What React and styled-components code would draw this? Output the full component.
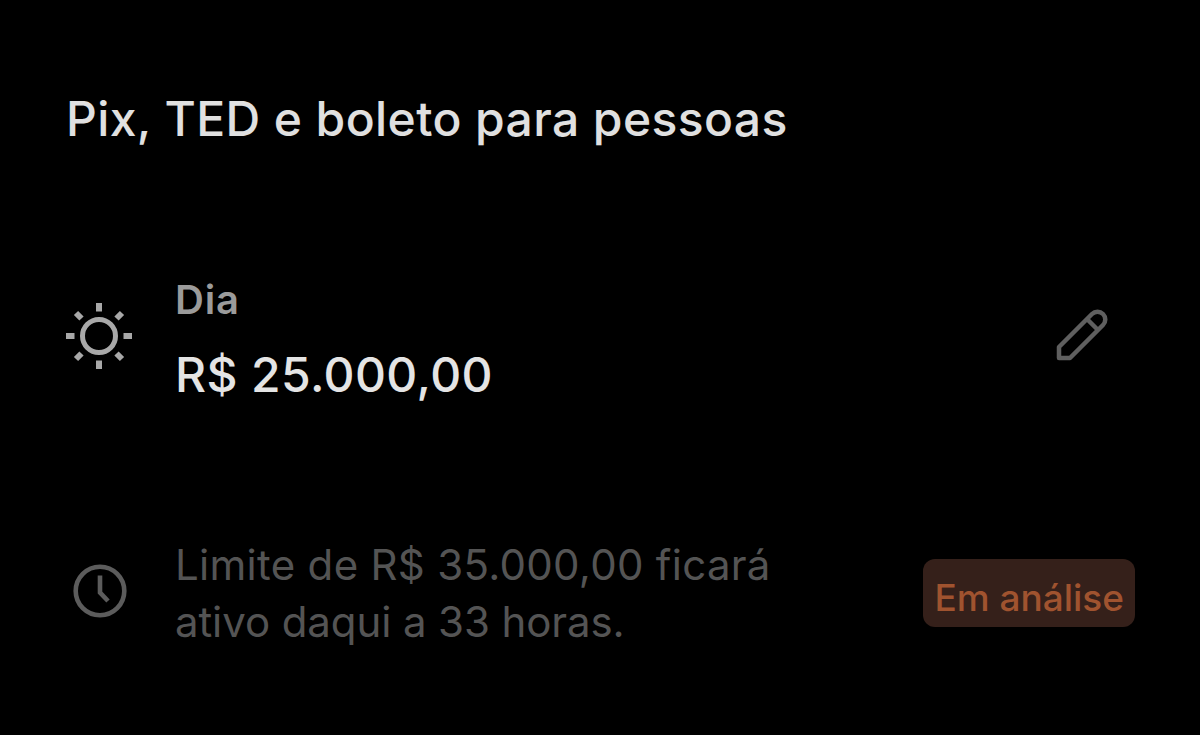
import React from "react";
import styled, { createGlobalStyle } from "styled-components";

const GlobalStyle = createGlobalStyle`
  html, body {
    margin: 0;
    background: #000;
  }
  body {
    font-family: Inter, "Liberation Sans", sans-serif;
  }
`;

const Page = styled.div`
  width: 1200px;
  height: 735px;
  box-sizing: border-box;
  padding: 92px 65px 0 65px;
  background: #000;
  overflow: hidden;
`;

const Title = styled.h1`
  margin: 0 0 0 1px;
  font-size: 48px;
  line-height: 54px;
  letter-spacing: 0.4px;
  font-weight: 500;
  color: #e0e0e0;
`;

const Row = styled.div`
  display: flex;
  align-items: center;
  margin-top: ${(p) => p.$top}px;
`;

const IconSlot = styled.div`
  width: 110px;
  flex: none;
  display: flex;
  box-sizing: border-box;
  padding-left: ${(p) => p.$indent || 0}px;
  margin-bottom: ${(p) => p.$lift || 0}px;
`;

const Body = styled.div`
  flex: 1;
  display: flex;
  flex-direction: column;
`;

const Label = styled.div`
  font-size: 40px;
  line-height: 44px;
  letter-spacing: 0.8px;
  font-weight: 600;
  color: #9b9b9b;
`;

const Amount = styled.div`
  margin-top: 26px;
  font-size: 48px;
  line-height: 54px;
  letter-spacing: 0.4px;
  font-weight: 500;
  color: #e4e4e4;
`;

const NoteLine = styled.div`
  font-size: 42px;
  line-height: 57px;
  letter-spacing: ${(p) => p.$spacing}px;
  color: #545454;
`;

const Badge = styled.div`
  flex: none;
  height: 68px;
  box-sizing: border-box;
  padding: 9px 11px 0;
  display: flex;
  align-items: center;
  border-radius: 12px;
  background: #35201a;
  color: #a0532f;
  font-size: 37px;
  font-weight: 500;
`;

const EditButton = styled.div`
  flex: none;
  display: flex;
  margin: 0 25px 12px 0;
`;

const SunIcon = () => (
  <svg width="68" height="68" viewBox="0 0 68 68" fill="none" stroke="#a8a8a8" strokeWidth="5">
    <circle cx="34" cy="34" r="16.5" />
    <path strokeWidth="6" d="M34 1v8.5M34 58.5v8.5M1 34h8.5M58.5 34h8.5M11 11l5.5 5.5M51.5 16.5l5.5-5.5M11 57l5.5-5.5M51.5 51.5l5.5 5.5" />
  </svg>
);

const PencilIcon = () => (
  <svg width="54" height="54" viewBox="0 0 54 54" fill="none" stroke="#5f5f5f" strokeWidth="4.5" strokeLinejoin="round">
    <path d="M3 40L36 7a7.8 7.8 0 0 1 11 0a7.8 7.8 0 0 1 0 11L14 51H3z" />
    <path d="M31 12l11 11" />
  </svg>
);

const ClockIcon = () => (
  <svg width="56" height="56" viewBox="0 0 56 56" fill="none" stroke="#5c5c5c" strokeWidth="4.6">
    <circle cx="28" cy="28" r="24.3" />
    <path d="M28 12.5V29.5l8 8.5" />
  </svg>
);

export default function App() {
  return (
    <Page>
      <GlobalStyle />
      <Title>Pix, TED e boleto para pessoas</Title>
      <Row $top={132}>
        <IconSlot $lift={8}>
          <SunIcon />
        </IconSlot>
        <Body>
          <Label>Dia</Label>
          <Amount>R$ 25.000,00</Amount>
        </Body>
        <EditButton>
          <PencilIcon />
        </EditButton>
      </Row>
      <Row $top={134}>
        <IconSlot $indent={7} $lift={4}>
          <ClockIcon />
        </IconSlot>
        <Body>
          <NoteLine $spacing={0.3}>Limite de R$ 35.000,00 ficará</NoteLine>
          <NoteLine $spacing={-0.1}>ativo daqui a 33 horas.</NoteLine>
        </Body>
        <Badge>Em análise</Badge>
      </Row>
    </Page>
  );
}
